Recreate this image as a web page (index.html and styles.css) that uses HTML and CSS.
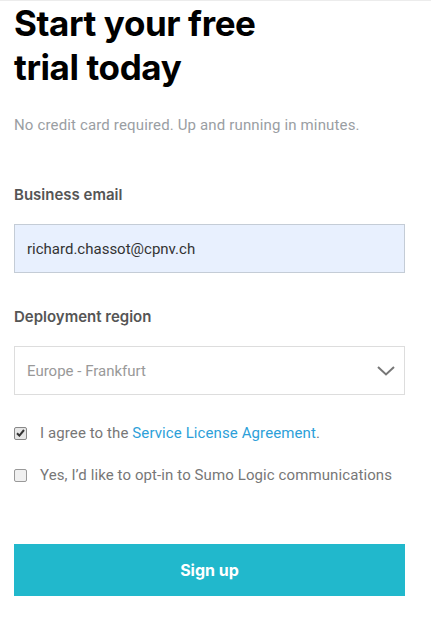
FILE: index.html
```html
<!DOCTYPE html>
<html>
<head>
<meta charset="utf-8">
<link rel="stylesheet" href="styles.css">
</head>
<body>
<main class="page">
  <h1 class="title">Start your free<br>trial today</h1>
  <p class="subtitle">No credit card required. Up and running in minutes.</p>
  <form class="form">
    <div class="field">
      <label class="label">Business email</label>
      <div class="input filled">richard.chassot@cpnv.ch</div>
    </div>
    <div class="field">
      <label class="label">Deployment region</label>
      <div class="input select">
        <span>Europe - Frankfurt</span>
        <svg class="chev" width="18" height="10" viewBox="0 0 18 10"><path d="M1 1 L9 8.5 L17 1" fill="none" stroke="#777" stroke-width="2"/></svg>
      </div>
    </div>
    <div class="checks">
      <label class="check"><span class="box checked"><svg width="9" height="8" viewBox="0 0 9 8"><path d="M1 4.2 L3.4 6.6 L8 1" fill="none" stroke="#333" stroke-width="2"/></svg></span><span>I agree to the <a class="link">Service License Agreement</a>.</span></label>
      <label class="check"><span class="box"></span><span>Yes, I’d like to opt-in to Sumo Logic communications</span></label>
    </div>
    <button type="button" class="btn">Sign up</button>
  </form>
</main>
</body>
</html>
```

FILE: styles.css
```css
html, body { margin: 0; padding: 0; background: #fff; }
body { border-top: 1px solid #ececec; font-family: Roboto, "Noto Sans", sans-serif; }
.page { width: 391px; padding: 0 14px; }
.title { margin: 0; font-family: Inter, sans-serif; font-size: 35px; line-height: 44px; font-weight: 700; color: #000; letter-spacing: -0.4px; }
.subtitle { margin: 26px 0 0; font-size: 15px; line-height: 20px; color: #9a9ea3; font-weight: 400; letter-spacing: 0.15px; }
.form { display: flex; flex-direction: column; }
.field { display: flex; flex-direction: column; }
.field:first-child { margin-top: 50px; }
.field + .field { margin-top: 34px; }
.label { font-family: Inter, sans-serif; font-size: 15px; line-height: 20px; font-weight: 600; color: #555; }
.input { margin-top: 19px; height: 47px; box-sizing: content-box; display: flex; align-items: center; padding: 0 12px; font-size: 15px; border: 1px solid #ddd; }
.filled { background: #e8f0fe; border-color: #c4ccd6; color: #333; }
.select { justify-content: space-between; color: #999; padding-right: 9px; }
.chev { margin-top: 1px; }
.checks { display: flex; flex-direction: column; gap: 22px; margin-top: 28px; }
.check { display: flex; align-items: center; gap: 13px; font-size: 15px; line-height: 20px; color: #777; letter-spacing: 0.1px; }
.box { width: 11px; height: 11px; border: 1px solid #999; border-radius: 2px; background: #f0f0f0; display: flex; align-items: center; justify-content: center; flex: none; }
.box.checked { background: #e6e6e6; border-color: #888; }
.link { color: #2d9fd9; }
.btn { margin-top: 59px; height: 52px; border: 0; background: #21b8cc; color: #fff; font-family: Inter, sans-serif; font-size: 16px; font-weight: 700; cursor: pointer; }
```
